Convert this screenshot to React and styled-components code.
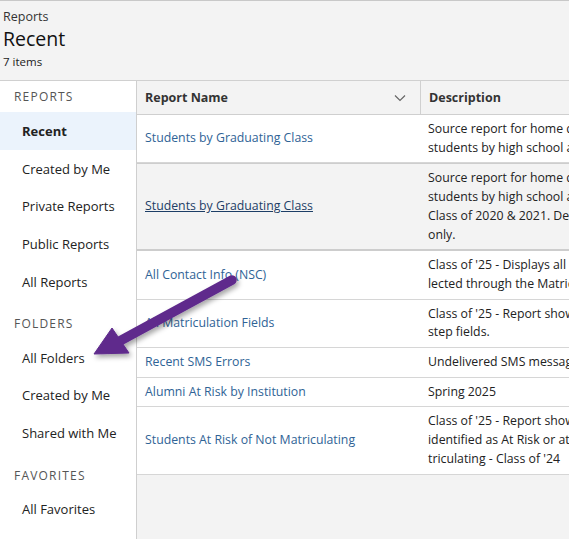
import React from "react";
import styled, { createGlobalStyle } from "styled-components";

const Global = createGlobalStyle`
  html, body { margin: 0; padding: 0; background: #f3f3f3; }
  body {
    font-family: "Open Sans", "Noto Sans", Arial, sans-serif;
    color: #222;
    overflow: hidden;
  }
`;

const Page = styled.div`
  width: 569px;
  height: 539px;
  display: flex;
  flex-direction: column;
  position: relative;
  overflow: hidden;
  background: #f3f3f3;
`;

const TopBar = styled.header`
  height: 79px;
  border-top: 1px solid #c8c8c8;
  border-bottom: 1px solid #d0d0d0;
  background: #f3f3f3;
  padding: 0 0 0 3px;
  display: flex;
  flex-direction: column;
`;

const Crumb = styled.div`
  font-size: 12.5px;
  line-height: 16px;
  margin-top: 8px;
  color: #333;
`;

const Title = styled.h1`
  margin: 1px 0 0;
  font-size: 19.5px;
  font-weight: 400;
  line-height: 26px;
  color: #111;
`;

const Count = styled.div`
  font-size: 11.5px;
  line-height: 16px;
  margin-top: 2px;
  color: #222;
`;

const Body = styled.div`
  flex: 1;
  display: flex;
  min-height: 0;
`;

const Sidebar = styled.nav`
  width: 136px;
  flex: none;
  background: #fff;
  border-right: 1px solid #cfcfcf;
  display: flex;
  flex-direction: column;
`;

const SectionHead = styled.div`
  height: 31px;
  display: flex;
  align-items: center;
  padding-left: 14px;
  margin-top: ${(p) => (p.$first ? "0" : "7.5px")};
  font-size: 12px;
  letter-spacing: 1.2px;
  color: #555;
`;

const NavItem = styled.div`
  height: 37.7px;
  display: flex;
  align-items: center;
  padding-left: 22px;
  font-size: 13px;
  color: #222;
  font-weight: ${(p) => (p.$active ? 700 : 400)};
  background: ${(p) => (p.$active ? "#ebf3fc" : "transparent")};
`;

const Main = styled.main`
  flex: 1;
  min-width: 0;
  overflow: hidden;
  background: #f3f3f3;
`;

const Table = styled.div`
  width: 700px;
  display: flex;
  flex-direction: column;
`;

const HeadRow = styled.div`
  display: grid;
  grid-template-columns: 283px 1fr;
  height: 33px;
  background: #f3f3f3;
  border-bottom: 1px solid #cfcfcf;
`;

const HeadCell = styled.div`
  display: flex;
  align-items: center;
  justify-content: space-between;
  padding: 0 8px;
  font-size: 12.5px;
  font-weight: 700;
  color: #333;
  border-left: ${(p) => (p.$divider ? "1px solid #d0d0d0" : "none")};
`;

const Chevron = styled.svg`
  width: 12px;
  height: 8px;
  margin-right: 6px;
`;

const Row = styled.div`
  display: grid;
  grid-template-columns: 283px 1fr;
  background: ${(p) => (p.$hover ? "#f3f3f3" : "#fff")};
  border-bottom: ${(p) => (p.$hover ? "2px solid #cdcdcd" : "1px solid #d6d6d6")};
  border-top: ${(p) => (p.$hover ? "1px solid #cdcdcd" : "none")};
`;

const NameCell = styled.div`
  display: flex;
  align-items: center;
  padding: 5px 8px;
`;

const Link = styled.a`
  font-size: 12.3px;
  line-height: 18.7px;
  color: ${(p) => (p.$hover ? "#1d3e66" : "#2f6396")};
  text-decoration: ${(p) => (p.$hover ? "underline" : "none")};
  cursor: pointer;
`;

const DescCell = styled.div`
  padding: 5px 8px;
  font-size: 12.3px;
  line-height: 18.7px;
  color: #222;
`;

const Line = styled.span`
  display: block;
  white-space: nowrap;
`;

const ArrowLayer = styled.svg`
  position: absolute;
  left: 0;
  top: 0;
  width: 569px;
  height: 539px;
  pointer-events: none;
`;

const reports = [
  {
    name: "Students by Graduating Class",
    desc: ["Source report for home dashboard showing", "students by high school and graduating class."],
  },
  {
    name: "Students by Graduating Class",
    hover: true,
    desc: [
      "Source report for home dashboard showing",
      "students by high school and graduating class.",
      "Class of 2020 & 2021. Designed for advisors",
      "only.",
    ],
  },
  {
    name: "All Contact Info (NSC)",
    desc: ["Class of '25 - Displays all contact info col-", "lected through the Matriculation step."],
  },
  {
    name: "All Matriculation Fields",
    desc: ["Class of '25 - Report showing matriculation", "step fields."],
  },
  { name: "Recent SMS Errors", desc: ["Undelivered SMS messages from the last 30 days"] },
  { name: "Alumni At Risk by Institution", desc: ["Spring 2025"] },
  {
    name: "Students At Risk of Not Matriculating",
    desc: [
      "Class of '25 - Report showing students",
      "identified as At Risk or at risk of not ma-",
      "triculating - Class of '24",
    ],
  },
];

const sections = [
  { title: "REPORTS", items: ["Recent", "Created by Me", "Private Reports", "Public Reports", "All Reports"] },
  { title: "FOLDERS", items: ["All Folders", "Created by Me", "Shared with Me"] },
  { title: "FAVORITES", items: ["All Favorites"] },
];

export default function App() {
  return (
    <Page>
      <Global />
      <TopBar>
        <Crumb>Reports</Crumb>
        <Title>Recent</Title>
        <Count>7 items</Count>
      </TopBar>
      <Body>
        <Sidebar>
          {sections.map((s, i) => (
            <React.Fragment key={s.title}>
              <SectionHead $first={i === 0}>{s.title}</SectionHead>
              {s.items.map((it, j) => (
                <NavItem key={it + j} $active={i === 0 && j === 0}>
                  {it}
                </NavItem>
              ))}
            </React.Fragment>
          ))}
        </Sidebar>
        <Main>
          <Table>
            <HeadRow>
              <HeadCell>
                Report Name
                <Chevron viewBox="0 0 12 8">
                  <path d="M1 1.5 L6 6.5 L11 1.5" fill="none" stroke="#666" strokeWidth="1.2" />
                </Chevron>
              </HeadCell>
              <HeadCell $divider>Description</HeadCell>
            </HeadRow>
            {reports.map((r, i) => (
              <Row key={i} $hover={r.hover}>
                <NameCell>
                  <Link $hover={r.hover}>{r.name}</Link>
                </NameCell>
                <DescCell>
                  {r.desc.map((l, k) => (
                    <Line key={k}>{l}</Line>
                  ))}
                </DescCell>
              </Row>
            ))}
          </Table>
        </Main>
      </Body>
      <ArrowLayer viewBox="0 0 569 539">
        <defs>
          <filter id="shadow" x="-20%" y="-20%" width="140%" height="160%">
            <feDropShadow dx="2" dy="3" stdDeviation="2.5" floodColor="#000" floodOpacity="0.35" />
          </filter>
        </defs>
        <g filter="url(#shadow)" fill="#5e2a8c" stroke="#5e2a8c">
          <line x1="232" y1="280" x2="118" y2="342" strokeWidth="9.5" strokeLinecap="round" />
          <polygon points="94,354 112,328 129,353" strokeWidth="1" strokeLinejoin="round" />
        </g>
      </ArrowLayer>
    </Page>
  );
}
